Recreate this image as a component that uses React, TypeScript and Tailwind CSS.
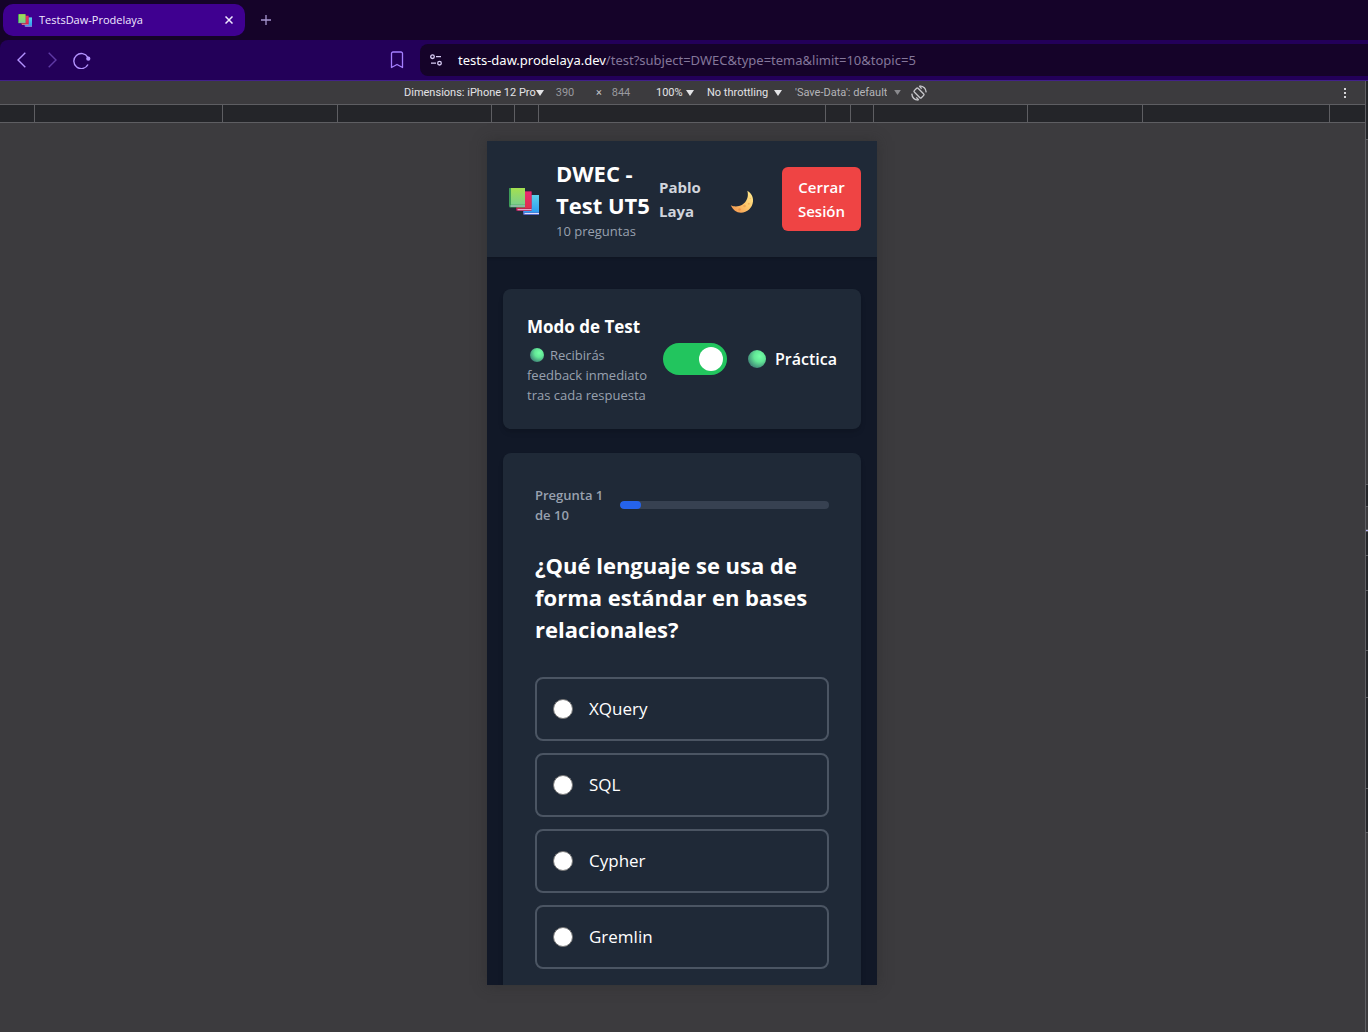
import React, { useState } from "react";

function BooksIcon({ className }: { className: string }) {
  return (
    <svg viewBox="0 0 30 27" className={className} aria-hidden="true">
      <defs>
        <linearGradient id="bookGreen" x1="0" y1="0" x2="0" y2="1">
          <stop offset="0" stopColor="#a4e04f" />
          <stop offset="1" stopColor="#7bcf8b" />
        </linearGradient>
        <linearGradient id="bookRed" x1="0" y1="0" x2="0" y2="1">
          <stop offset="0" stopColor="#e92a72" />
          <stop offset="1" stopColor="#e0314b" />
        </linearGradient>
        <linearGradient id="bookBlue" x1="0" y1="0" x2="0" y2="1">
          <stop offset="0" stopColor="#5bd0ea" />
          <stop offset="1" stopColor="#2f9df2" />
        </linearGradient>
      </defs>
      <path d="M14 7.500h15.500a.5.5 0 0 1 .5.5v18.500a.5.5 0 0 1-.5.5H15.500a1.500 1.500 0 0 1-1.500-1.500z" fill="#5468c4" />
      <path d="M15 7h15v17.500H15z" fill="url(#bookBlue)" />
      <path d="M15.500 25h14.500v1H15.500z" fill="#e4defa" />
      <path d="M7 3.500h15.500V23H8.500A1.500 1.500 0 0 1 7 21.500z" fill="#a81a52" />
      <path d="M8 3.500h14.500v17H8z" fill="url(#bookRed)" />
      <path d="M8.500 21.200H22.500v1H8.500z" fill="#ecd3ea" />
      <path d="M0 .5A.5.5 0 0 1 .5 0H16v19.500H1.500A1.500 1.500 0 0 1 0 18z" fill="#3d9b58" />
      <path d="M2 0h14v16.700H2z" fill="url(#bookGreen)" />
      <path d="M1.500 17.500H16v1H1.500z" fill="#dcd9ee" />
    </svg>
  );
}

function MoonIcon() {
  return (
    <svg viewBox="0 0 24 24" className="size-6" aria-hidden="true">
      <defs>
        <linearGradient id="moon" x1="1" y1="0.200" x2="0.200" y2="1">
          <stop offset="0" stopColor="#ffe58a" />
          <stop offset="0.500" stopColor="#fcc66a" />
          <stop offset="1" stopColor="#f59a51" />
        </linearGradient>
      </defs>
      <path d="M17.300.8C21.300 3 23.400 7 23 11.500 22.400 17.800 17.200 22.700 11 22.700 6.500 22.700 2.700 19.800.8 15.300 3.800 17 8.500 16.900 12.200 14.800 16.800 12 19 6.500 17.300.8z" fill="url(#moon)" />
      <circle cx="14.500" cy="16" r="1.300" fill="#f0a856" />
      <circle cx="18.800" cy="13.800" r="1" fill="#f2b35c" />
      <circle cx="9.500" cy="19.500" r="1.200" fill="#ee9347" />
      <circle cx="20.300" cy="8.500" r=".8" fill="#f5c069" />
    </svg>
  );
}

function GreenBall({ className }: { className: string }) {
  return (
    <svg viewBox="0 0 18 18" className={className} aria-hidden="true">
      <defs>
        <radialGradient id="ball" cx="0.650" cy="0.350" r="0.700">
          <stop offset="0" stopColor="#74ffa6" />
          <stop offset="0.450" stopColor="#62e796" />
          <stop offset="1" stopColor="#3f8577" />
        </radialGradient>
      </defs>
      <circle cx="9" cy="9" r="9" fill="url(#ball)" />
    </svg>
  );
}

function Arrow({ dim = false }: { dim?: boolean }) {
  return (
    <svg viewBox="0 0 8 6" className={dim ? "h-[5px] w-[7px] shrink-0 text-[#8a8a8e]" : "h-[6px] w-2 shrink-0 text-[#e3e3e6]"} aria-hidden="true">
      <path d="M0 0h8L4 6z" fill="currentColor" />
    </svg>
  );
}

function Picker({ label, value, dim = false, className }: { label: string; value: string; dim?: boolean; className: string }) {
  return (
    <label className={"flex items-center justify-between " + className}>
      <select
        aria-label={label}
        className={
          "field-sizing-content cursor-pointer appearance-none bg-transparent p-0 pt-[2px] outline-none " +
          (dim ? "text-[#b4b4b8]" : "text-[#e3e3e6]")
        }
      >
        <option>{value}</option>
      </select>
      <Arrow dim={dim} />
    </label>
  );
}

function TabStrip() {
  return (
    <div className="flex h-10 items-center gap-3 bg-[#150329] pl-[3px]">
      <div role="tab" aria-selected="true" className="flex h-8 w-[242px] items-center rounded-[10px] bg-[#3f0090] pr-[10px] pl-[15px]">
        <BooksIcon className="h-[13px] w-[14px]" />
        <span className="ml-[7px] flex-1 text-[11px] text-[#f0e9ff]">TestsDaw-Prodelaya</span>
        <button type="button" aria-label="Cerrar pestaña" className="p-[2px] text-[#f0e9ff]">
          <svg viewBox="0 0 8 8" className="size-2" fill="none" stroke="currentColor" strokeWidth="1.500">
            <path d="M.5.5l7 7M7.500.5l-7 7" />
          </svg>
        </button>
      </div>
      <button type="button" aria-label="Nueva pestaña" className="p-1 text-[#a796cf]">
        <svg viewBox="0 0 10 10" className="size-[10px]" stroke="currentColor" strokeWidth="1.300">
          <path d="M5 0v10M0 5h10" />
        </svg>
      </button>
    </div>
  );
}

function AddressBar() {
  return (
    <div className="bg-[#150329]">
      <div className="flex h-[41px] items-center rounded-tl-lg border-b border-[#42208a] bg-[#230059]">
        <button type="button" aria-label="Atrás" className="ml-[17px] text-[#b392ff]">
          <svg viewBox="0 0 9 16" className="h-4 w-[9px]" fill="none" stroke="currentColor" strokeWidth="1.400">
            <path d="M8.300.7L1 8l7.300 7.300" />
          </svg>
        </button>
        <button type="button" aria-label="Adelante" className="ml-[22px] text-[#5f3aa5]">
          <svg viewBox="0 0 9 16" className="h-4 w-[9px]" fill="none" stroke="currentColor" strokeWidth="1.400">
            <path d="M.7.7L8 8 .7 15.300" />
          </svg>
        </button>
        <button type="button" aria-label="Recargar" className="ml-4 text-[#b392ff]">
          <svg viewBox="0 0 18 17" className="h-[17px] w-[18px]" fill="none" stroke="currentColor" strokeWidth="1.400">
            <path d="M14.800 5.300A7.500 7.500 0 1 0 15 12.500" />
            <circle cx="15.300" cy="6.700" r="2.100" fill="currentColor" stroke="none" />
          </svg>
        </button>
        <button type="button" aria-label="Guardar en marcadores" className="ml-[299px] text-[#a57fff]">
          <svg viewBox="0 0 14 18" className="h-[18px] w-[14px]" fill="none" stroke="currentColor" strokeWidth="1.300" strokeLinejoin="round">
            <path d="M1.500 2.500A1.500 1.500 0 0 1 3 1h8a1.500 1.500 0 0 1 1.500 1.500V16.500L7 13.500 1.500 16.500z" />
          </svg>
        </button>
        <div className="ml-4 flex h-8 flex-1 items-center gap-4 rounded-l-lg bg-[#150329] pl-[10px]">
          <button type="button" aria-label="Información del sitio" className="text-[#d9cdf5]">
            <svg viewBox="0 0 12 12" className="size-3" fill="none" stroke="currentColor" strokeWidth="1.300">
              <circle cx="2.500" cy="2.700" r="1.800" />
              <path d="M6 2.700h5M1 9.200h5" />
              <circle cx="9.500" cy="9.200" r="1.800" />
            </svg>
          </button>
          <div
            role="textbox"
            aria-label="Dirección"
            contentEditable
            suppressContentEditableWarning
            className="flex-1 font-['Noto_Sans',sans-serif] text-[13px] leading-5 text-[#84779a] outline-none"
          >
            <span className="text-white">tests-daw.prodelaya.dev</span>/test?subject=DWEC&amp;type=tema&amp;limit=10&amp;topic=5
          </div>
        </div>
      </div>
    </div>
  );
}

function DeviceToolbar() {
  return (
    <div className="relative flex h-[23px] items-center justify-center bg-[#3c3b3e] pr-[34px] font-[Roboto,sans-serif] text-[11px]">
      <Picker label="Dimensions" value="Dimensions: iPhone 12 Pro" className="w-[140px]" />
      <input aria-label="Width" defaultValue="390" className="ml-[9px] w-6 bg-transparent pt-[2px] text-center text-[#9a9a9e] outline-none" />
      <span className="mr-[7px] ml-[19px] w-[6px] pt-[2px] text-[#c4c4c8]">×</span>
      <input aria-label="Height" defaultValue="844" className="w-6 bg-transparent pt-[2px] text-center text-[#9a9a9e] outline-none" />
      <Picker label="Zoom" value="100%" className="ml-[23px] w-[38px]" />
      <Picker label="Throttling" value="No throttling" className="ml-[13px] w-[75px]" />
      <Picker label="Save-Data" value="'Save-Data': default" dim className="ml-[13px] w-[106px]" />
      <button type="button" aria-label="Rotate" className="ml-[10px] text-[#c7c7cb]">
        <svg viewBox="0 0 24 24" className="size-4" fill="none" stroke="currentColor" strokeWidth="2">
          <rect x="8" y="4.500" width="8" height="15" rx="1.500" transform="rotate(-45 12 12)" />
          <path d="M13 1.200C18.500 1.600 22.400 5.500 22.800 11M11 22.800C5.500 22.400 1.600 18.500 1.200 13" />
          <path d="M16 5.500L12.500 1.500M8 18.500l3.500 4" />
        </svg>
      </button>
      <button type="button" aria-label="More options" className="absolute right-[17px] flex flex-col gap-[2px] p-[2px]">
        <span className="size-[2px] bg-[#d5d5d8]" />
        <span className="size-[2px] bg-[#d5d5d8]" />
        <span className="size-[2px] bg-[#d5d5d8]" />
      </button>
    </div>
  );
}

function BreakpointRuler() {
  return (
    <div className="flex h-[19px] justify-center border-y border-[#5e5e62] bg-[#242529] pr-[2px]">
      <div className="flex divide-x divide-[#5e5e62] border-x border-[#5e5e62]">
        <div className="w-[188px]" />
        <div className="w-[115px]" />
        <div className="w-[154px]" />
        <div className="w-[23px]" />
        <div className="w-6" />
        <div className="w-[287px]" />
        <div className="w-[25px]" />
        <div className="w-[23px]" />
        <div className="w-[154px]" />
        <div className="w-[115px]" />
        <div className="w-[186px]" />
      </div>
    </div>
  );
}

function AppHeader() {
  return (
    <header className="flex items-center bg-[#1f2937] p-4 shadow-sm">
      <a href="#inicio" aria-label="Inicio" className="mt-1 mr-[17px] ml-[6px] shrink-0">
        <BooksIcon className="h-[27px] w-[30px]" />
      </a>
      <div className="w-[103px] shrink-0">
        <h1 className="text-[22px] leading-8 font-bold whitespace-nowrap text-white">
          DWEC -<br />
          Test UT5
        </h1>
        <p className="text-[13px] leading-5 text-gray-400">10 preguntas</p>
      </div>
      <span className="w-12 text-[15px] leading-6 font-bold text-gray-300">Pablo Laya</span>
      <button type="button" aria-label="Cambiar tema" className="mt-[6px] ml-auto">
        <MoonIcon />
      </button>
      <button type="button" className="ml-7 w-[79px] rounded-md bg-[#ef4444] py-2 text-[15px] leading-6 font-semibold text-white">
        Cerrar
        <br />
        Sesión
      </button>
    </header>
  );
}

function ModeCard() {
  const [practice, setPractice] = useState(true);
  return (
    <section className="flex items-center rounded-lg bg-[#1f2937] p-6 shadow-md">
      <div className="w-[136px] shrink-0">
        <h2 className="mb-1 text-[17px] leading-7 font-bold text-white">Modo de Test</h2>
        <p className="text-[13px] leading-5 whitespace-nowrap text-gray-400">
          <GreenBall className="mr-[6px] mb-[3px] ml-[3px] inline size-[14px]" />
          Recibirás
          <br />
          feedback inmediato
          <br />
          tras cada respuesta
        </p>
      </div>
      <label className="flex flex-1 cursor-pointer items-center">
        <input
          type="checkbox"
          role="switch"
          checked={practice}
          onChange={(e) => setPractice(e.target.checked)}
          className="peer sr-only"
        />
        <span className="flex h-8 w-16 shrink-0 rounded-full bg-gray-500 p-1 peer-checked:justify-end peer-checked:bg-[#22c55e]">
          <span className="size-6 rounded-full bg-white" />
        </span>
        <span className="ml-auto flex items-center gap-[9px] text-base leading-7 font-semibold text-white">
          <GreenBall className="size-[18px]" />
          Práctica
        </span>
      </label>
    </section>
  );
}

const answers = ["XQuery", "SQL", "Cypher", "Gremlin"];

function QuestionCard() {
  return (
    <section className="rounded-lg bg-[#1f2937] p-8 shadow-md">
      <div className="mb-6 flex items-center">
        <span id="progress" className="w-[85px] shrink-0 text-[13px] leading-5 font-semibold text-gray-400">
          Pregunta 1<br />
          de 10
        </span>
        <div
          role="progressbar"
          aria-labelledby="progress"
          aria-valuenow={1}
          aria-valuemax={10}
          className="h-2 flex-1 overflow-hidden rounded-full bg-[#374151]"
        >
          <div className="h-full w-1/10 rounded-full bg-[#2563eb]" />
        </div>
      </div>
      <fieldset>
        <legend className="mb-8 text-[22px] leading-8 font-bold text-white">
          ¿Qué lenguaje se usa de forma estándar en bases relacionales?
        </legend>
        <div className="flex flex-col gap-3">
          {answers.map((answer) => (
            <label
              key={answer}
              className="flex cursor-pointer items-center gap-4 rounded-lg border-2 border-[#4b5563] p-4 text-[17px] leading-7 text-white"
            >
              <input
                type="radio"
                name="answer"
                value={answer}
                className="size-5 appearance-none rounded-full border border-[#767676] bg-white checked:border-4 checked:border-[#2563eb]"
              />
              {answer}
            </label>
          ))}
        </div>
      </fieldset>
    </section>
  );
}

function DockedPanelEdge() {
  return (
    <div className="flex w-[3px] shrink-0 flex-col divide-y divide-[#5e5e62] border-l border-[#5e5e62] bg-[#242529]">
      <div className="h-[59px]" />
      <div className="h-[345px] bg-[#3c3b3e]" />
      <div className="h-[22px]" />
      <div className="h-[23px] bg-[#3c3b3e]" />
      <div className="h-[2px] bg-[#b9b4f5]" />
      <div className="h-6" />
      <div className="h-[35px]" />
      <div className="h-[60px]" />
      <div className="h-[47px]" />
      <div className="h-[91px]" />
      <div className="h-11" />
      <div className="flex-1 bg-[#3c3b3e]" />
    </div>
  );
}

export default function App() {
  return (
    <div className="flex h-screen flex-col overflow-hidden bg-[#3c3b3e] font-['Open_Sans','Noto_Sans',sans-serif]">
      <TabStrip />
      <AddressBar />
      <div className="flex min-h-0 flex-1">
        <div className="flex min-w-0 flex-1 flex-col">
          <DeviceToolbar />
          <BreakpointRuler />
          <main className="flex min-h-0 flex-1 justify-center pt-[18px] pr-px pb-[47px]">
            <div className="w-[390px] overflow-hidden bg-[#111827] shadow-[0_0_12px_rgba(40,40,40,0.500)]">
              <AppHeader />
              <div className="flex flex-col gap-6 px-4 py-8">
                <ModeCard />
                <QuestionCard />
              </div>
            </div>
          </main>
        </div>
        <DockedPanelEdge />
      </div>
    </div>
  );
}
